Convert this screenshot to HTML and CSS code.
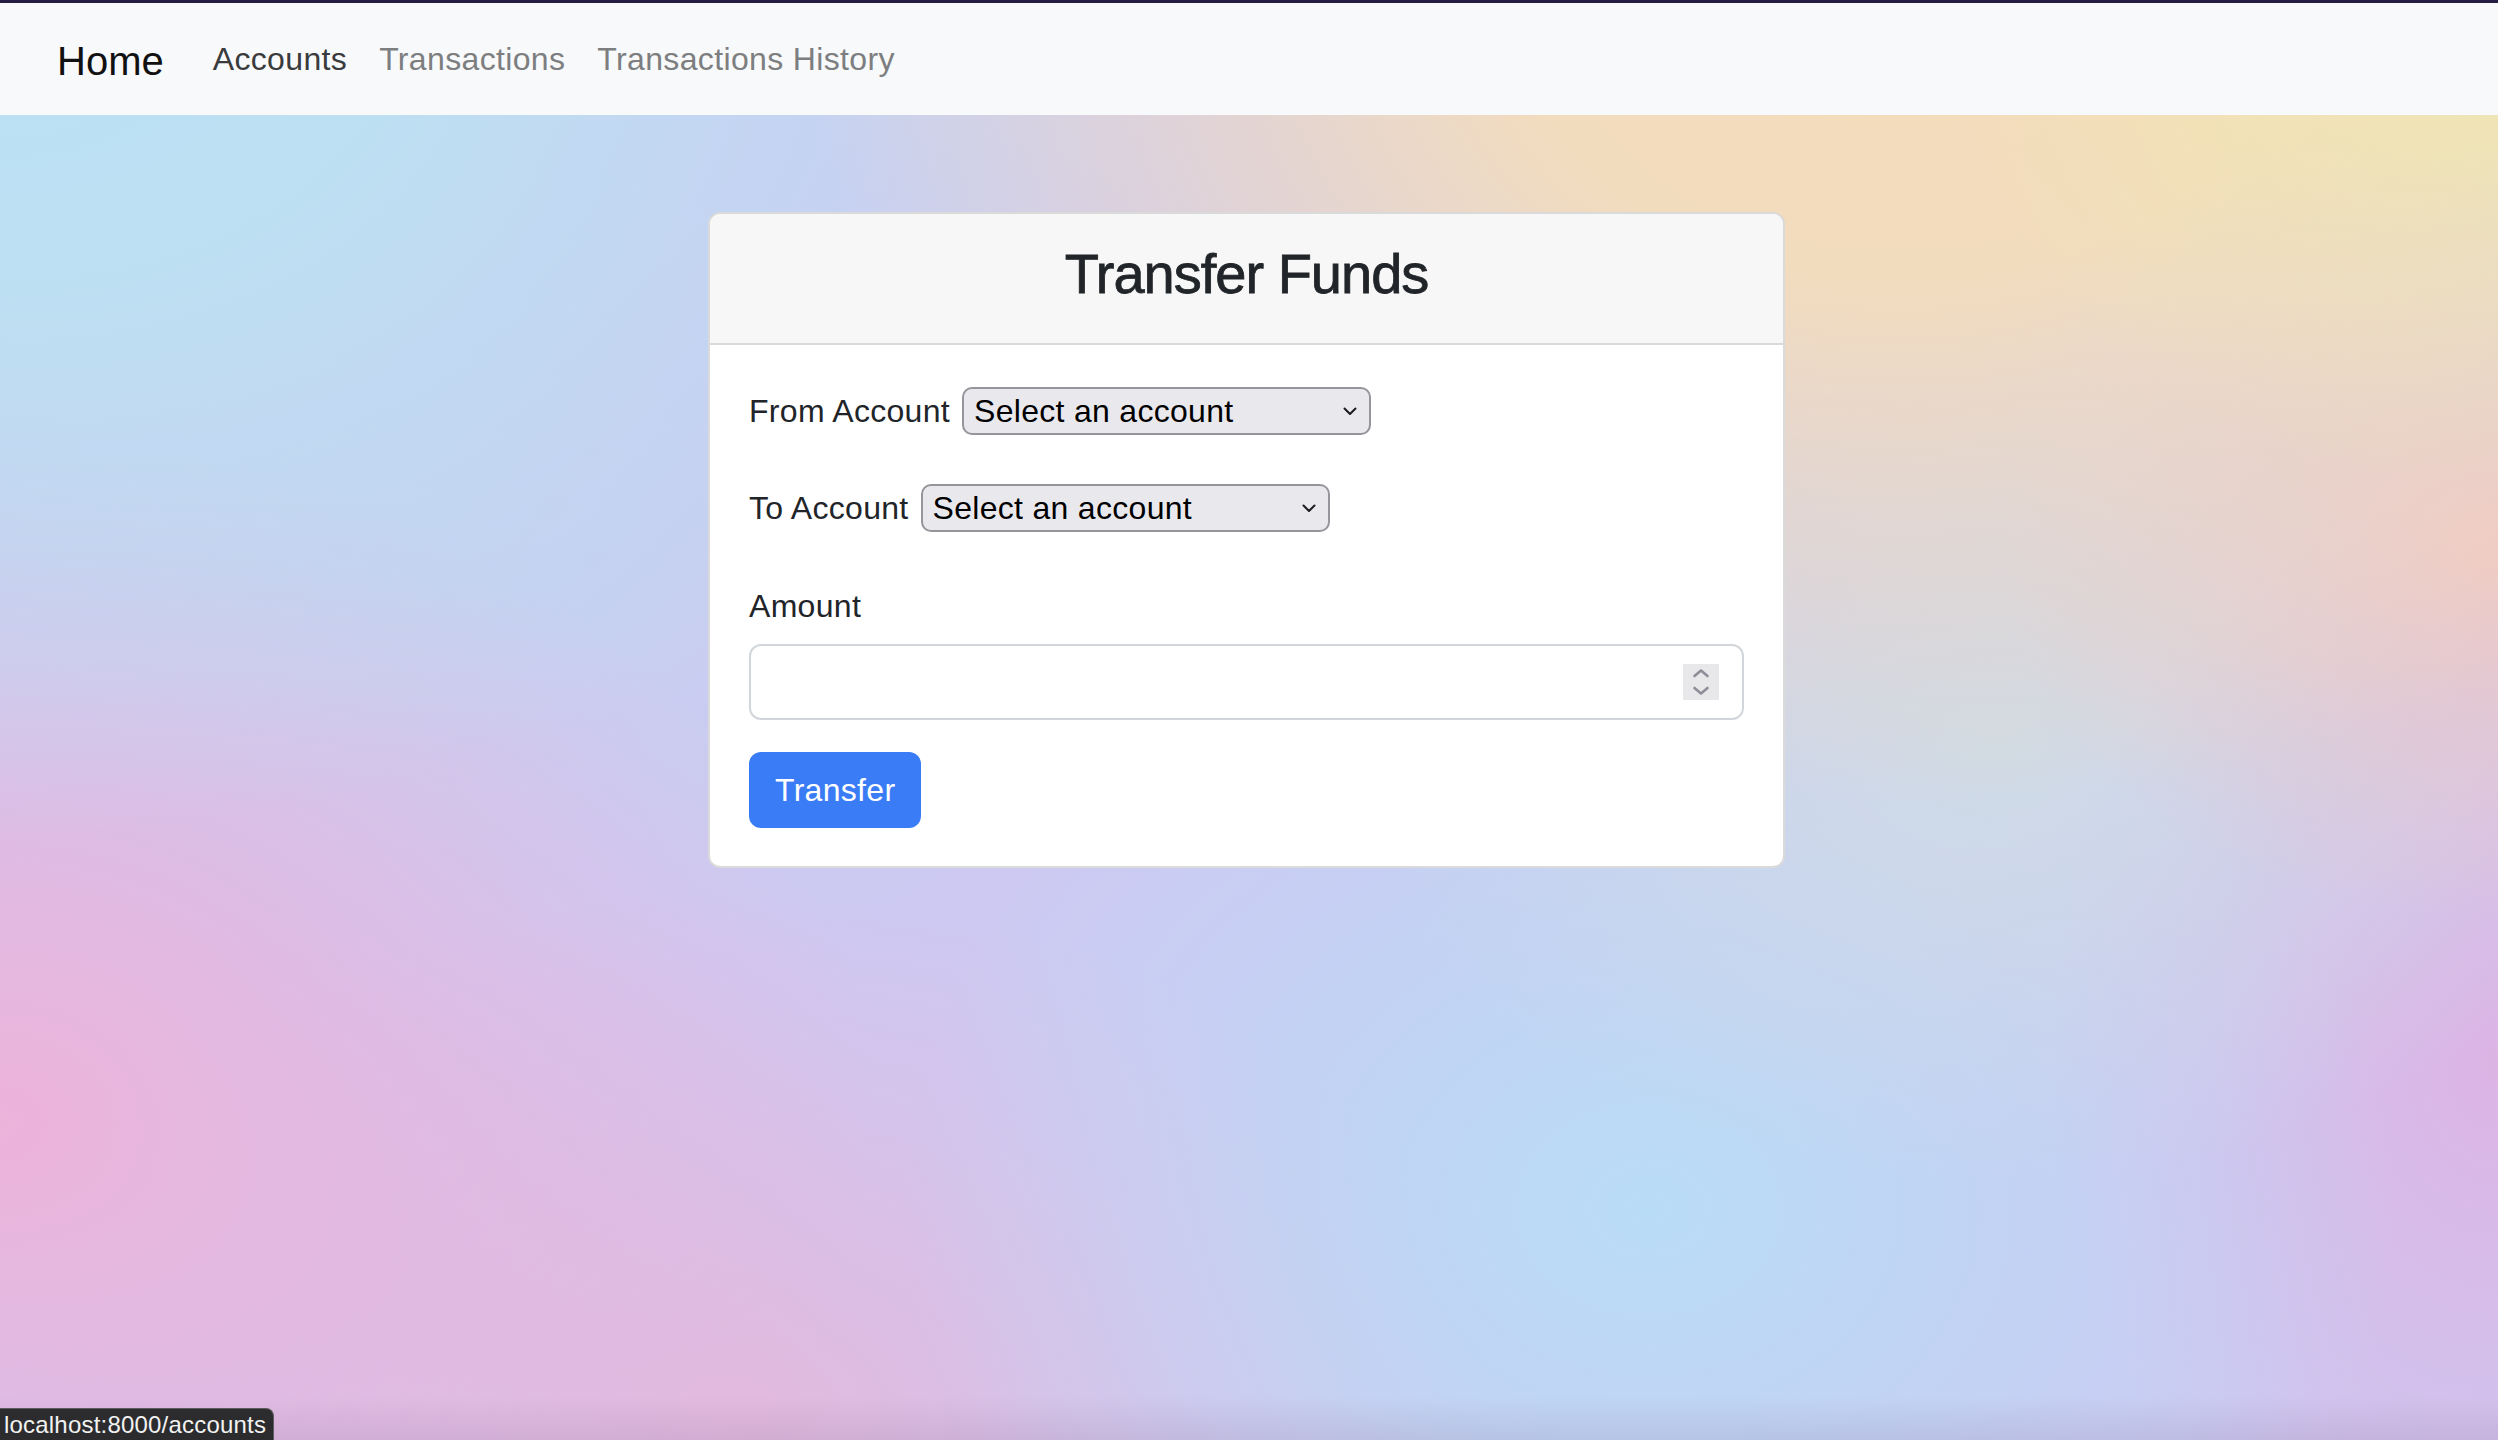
FILE: index.html
```html
<!DOCTYPE html>
<html lang="en">
<head>
<meta charset="utf-8">
<title>Transfer Funds</title>
<link rel="stylesheet" href="styles.css">
</head>
<body>
<div class="page">
  <nav class="navbar">
    <a class="brand" href="#">Home</a>
    <ul class="nav">
      <li><a class="nav-link is-hover" href="#">Accounts</a></li>
      <li><a class="nav-link" href="#">Transactions</a></li>
      <li><a class="nav-link" href="#">Transactions History</a></li>
    </ul>
  </nav>

  <main class="main">
    <section class="card">
      <header class="card-header">
        <h3 class="card-title">Transfer Funds</h3>
      </header>
      <form class="card-body">
        <div class="field-row">
          <label class="field-label" for="from">From Account</label>
          <div class="select-wrap">
            <select id="from" class="select"><option>Select an account</option></select>
            <svg class="select-chev" viewBox="0 0 14 9" width="14" height="9"><path d="M1.5 1.5 L7 7 L12.5 1.5" fill="none" stroke="#1c1c1e" stroke-width="2" stroke-linecap="round" stroke-linejoin="round"/></svg>
          </div>
        </div>
        <div class="field-row field-row-to">
          <label class="field-label" for="to">To Account</label>
          <div class="select-wrap">
            <select id="to" class="select"><option>Select an account</option></select>
            <svg class="select-chev" viewBox="0 0 14 9" width="14" height="9"><path d="M1.5 1.5 L7 7 L12.5 1.5" fill="none" stroke="#1c1c1e" stroke-width="2" stroke-linecap="round" stroke-linejoin="round"/></svg>
          </div>
        </div>
        <label class="amount-label" for="amount">Amount</label>
        <div class="number-input">
          <input id="amount" class="number-field" type="text" inputmode="decimal">
          <span class="spinner">
            <svg viewBox="0 0 36 36" width="36" height="36"><path d="M11.5 12 L18 6.5 L24.5 12" fill="none" stroke="#8e8e99" stroke-width="2.6" stroke-linecap="round" stroke-linejoin="round"/><path d="M11.5 24 L18 29.5 L24.5 24" fill="none" stroke="#8e8e99" stroke-width="2.6" stroke-linecap="round" stroke-linejoin="round"/></svg>
          </span>
        </div>
        <button class="btn" type="button">Transfer</button>
      </form>
    </section>
  </main>

  <div class="status">localhost:8000/accounts</div>
</div>
</body>
</html>
```

FILE: styles.css
```css
html, body {
  margin: 0;
  padding: 0;
}

body {
  font-family: "Liberation Sans", Arial, Helvetica, sans-serif;
  color: #212529;
  min-height: 100vh;
  background-color: #cdc9f2;
  background-image:
    linear-gradient(to top, rgba(120, 90, 130, 0.14), rgba(120, 90, 130, 0) 44px),
    radial-gradient(ellipse 22% 32% at 100% 2%, #f2e8b0, rgba(242, 232, 176, 0)),
    radial-gradient(ellipse 44% 56% at 76% 0%, #f4dcbb 0%, #f2dcbe 35%, rgba(242, 220, 190, 0) 100%),
    radial-gradient(ellipse 48% 58% at 0% 0%, #bbe1f4 0%, #bddff2 35%, rgba(189, 223, 242, 0) 100%),
    radial-gradient(ellipse 20% 26% at 100% 38%, #efc9c4, rgba(239, 201, 196, 0)),
    radial-gradient(ellipse 26% 30% at 80% 52%, #cfdbe6, rgba(207, 219, 230, 0)),
    radial-gradient(ellipse 30% 42% at 66% 84%, #b9dcf6, rgba(185, 220, 246, 0)),
    radial-gradient(ellipse 18% 40% at 100% 74%, #dcb4e4, rgba(220, 180, 228, 0)),
    radial-gradient(ellipse 35% 48% at 0% 78%, #ecb2da, rgba(236, 178, 218, 0)),
    radial-gradient(ellipse 30% 36% at 30% 98%, #e2badf, rgba(226, 186, 223, 0)),
    radial-gradient(ellipse 28% 30% at 18% 40%, #c6d0f0, rgba(198, 208, 240, 0));
}

.page {
  min-height: 100vh;
  box-sizing: border-box;
  border-top: 3px solid #261d45;
}

/* ---------- navbar ---------- */
.navbar {
  height: 112px;
  background: #f8f9fa;
  display: flex;
  align-items: center;
  padding-left: 57px;
}

.brand {
  font-size: 40px;
  line-height: 60px;
  padding: 12px 0 8px;
  color: #111;
  text-decoration: none;
  margin-right: 33px;
}

.nav {
  list-style: none;
  margin: 0;
  padding: 0;
  display: flex;
}

.nav-link {
  display: block;
  font-size: 32px;
  line-height: 48px;
  padding: 16px 16px;
  letter-spacing: 0.35px;
  color: #7d7e80;
  text-decoration: none;
}

.nav-link.is-hover {
  color: #3a3b3c;
}

/* ---------- card ---------- */
.main {
  padding-top: 97px;
}

.card {
  width: 1077px;
  margin-left: calc(50% - 541px);
  box-sizing: border-box;
  background: #fff;
  border: 2px solid #dadada;
  border-radius: 12px;
  overflow: hidden;
}

.card-header {
  background: #f7f7f7;
  border-bottom: 2px solid #dadada;
  padding: 26px 0 36px;
  text-align: center;
}

.card-title {
  margin: 0;
  font-size: 56px;
  line-height: 67px;
  font-weight: 400;
  letter-spacing: -1px;
  color: #212529;
  -webkit-text-stroke: 0.8px #212529;
}

.card-body {
  margin: 0;
  padding: 42px 39px 38px;
}

.field-row {
  display: flex;
  align-items: center;
  height: 48px;
}

.field-row-to {
  margin-top: 49px;
}

.field-label {
  font-size: 32px;
  line-height: 48px;
  letter-spacing: 0.3px;
  color: #212529;
  margin-right: 12px;
}

.select-wrap {
  position: relative;
  width: 409px;
  height: 48px;
}

.select {
  -webkit-appearance: none;
  appearance: none;
  width: 100%;
  height: 48px;
  box-sizing: border-box;
  margin: 0;
  padding: 0 40px 0 10px;
  font-family: "Liberation Sans", Arial, Helvetica, sans-serif;
  font-size: 32px;
  letter-spacing: 0.3px;
  color: #000;
  background: #e9e9ed;
  border: 2px solid #95959c;
  border-radius: 10px;
}

.select-chev {
  position: absolute;
  right: 14px;
  top: 20px;
  pointer-events: none;
}

.amount-label {
  display: block;
  margin-top: 50px;
  margin-bottom: 14px;
  font-size: 32px;
  line-height: 48px;
  letter-spacing: 0.3px;
  color: #212529;
}

.number-input {
  height: 76px;
  box-sizing: border-box;
  border: 2px solid #d2d6db;
  border-radius: 12px;
  background: #fff;
  display: flex;
  align-items: center;
  padding: 0 23px 0 22px;
}

.number-field {
  flex: 1;
  min-width: 0;
  border: none;
  outline: none;
  background: transparent;
  font-family: "Liberation Sans", Arial, Helvetica, sans-serif;
  font-size: 32px;
  color: #212529;
  padding: 0;
}

.spinner {
  display: flex;
  width: 36px;
  height: 36px;
  background: #e8e8eb;
}

.btn {
  display: block;
  margin-top: 32px;
  height: 76px;
  padding: 0 26px;
  border: none;
  border-radius: 12px;
  background: #3a7cf6;
  color: #fff;
  font-family: "Liberation Sans", Arial, Helvetica, sans-serif;
  font-size: 32px;
  letter-spacing: 0.3px;
}

/* ---------- status bubble ---------- */
.status {
  position: fixed;
  left: 0;
  bottom: 0;
  width: 274px;
  height: 32px;
  box-sizing: border-box;
  padding-left: 4px;
  background: #2c2c2e;
  border-top: 1px solid #5c5c5f;
  border-right: 1px solid #5c5c5f;
  border-top-right-radius: 8px;
  color: #f2f2f2;
  font-size: 24px;
  line-height: 31px;
  letter-spacing: 0.2px;
  white-space: nowrap;
}
```
